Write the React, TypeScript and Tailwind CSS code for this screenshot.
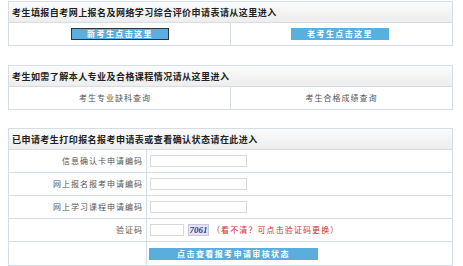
const font = { fontFamily: '"Noto Sans CJK SC", "Noto Sans", sans-serif' };

const Header = ({ children }: { children: React.ReactNode }) => (
  <div className="h-[21px] flex items-center pl-[3px] bg-gradient-to-b from-[#fbfbfb] to-[#ededed] border-b border-[#d5dde5] text-[9px] font-bold tracking-[0.45px] text-[#222] leading-none">
    {children}
  </div>
);

const Row = ({ label, last, children }: { label: string; last?: boolean; children: React.ReactNode }) => (
  <div className={`grid grid-cols-[138px_1fr] h-[23px] ${last ? "" : "border-b border-[#d5dde5]"}`}>
    <div className="flex items-center justify-end pr-[3px] border-r border-[#d5dde5] text-[8px] tracking-[1px] text-[#555]">
      {label}
    </div>
    <div className="flex items-center pl-[3px]">{children}</div>
  </div>
);

const Input = () => <input className="w-[97px] h-[12px] border border-[#d9d9d9] bg-white outline-none" />;

export default function App() {
  return (
    <main className="w-[463px] h-[266px] bg-white pl-[8px] pt-[1px]" style={font}>
      <div className="w-[445px] border border-[#d5dde5]">
        <Header>考生填报自考网上报名及网络学习综合评价申请表请从这里进入</Header>
        <div className="grid grid-cols-[222px_1fr] h-[22px]">
          <div className="flex items-center border-r border-[#d5dde5]">
            <button className="ml-[62px] w-[98px] h-[12px] bg-[#5aaee0] border border-[#2c3440] text-white text-[8px] font-bold tracking-[1.4px] leading-none">
              新考生点击这里
            </button>
          </div>
          <div className="flex items-center">
            <button className="ml-[60px] w-[98px] h-[12px] bg-[#5ab0dc] text-white text-[8px] font-bold tracking-[1.4px] leading-none">
              老考生点击这里
            </button>
          </div>
        </div>
      </div>

      <div className="w-[445px] mt-[19px] border border-[#d5dde5]">
        <Header>考生如需了解本人专业及合格课程情况请从这里进入</Header>
        <div className="grid grid-cols-[222px_1fr] h-[22px] text-[8px] tracking-[1px] text-[#555]">
          <div className="flex items-center pl-[70px] border-r border-[#d5dde5]">考生专业缺科查询</div>
          <div className="flex items-center justify-center">考生合格成绩查询</div>
        </div>
      </div>

      <div className="w-[445px] mt-[18px] border border-[#d5dde5]">
        <Header>已申请考生打印报名报考申请表或查看确认状态请在此进入</Header>
        <Row label="信息确认卡申请编码"><Input /></Row>
        <Row label="网上报名报考申请编码"><Input /></Row>
        <Row label="网上学习课程申请编码"><Input /></Row>
        <Row label="验证码">
          <input className="w-[34px] h-[12px] border border-[#d9d9d9] bg-white outline-none" />
          <span className="ml-[4px] w-[21px] h-[12px] flex items-center justify-center bg-[#e4e4ec] border border-[#c8c8d8] text-[9px] font-bold italic text-[#3b3b9e] leading-none" style={{ fontFamily: '"Liberation Serif", serif' }}>
            7061
          </span>
          <span className="ml-[3px] text-[8px] tracking-[1.1px] text-[#d0302a]">（看不清？可点击验证码更换）</span>
        </Row>
        <Row label="" last>
          <button className="-ml-[1px] w-[169px] h-[12px] bg-[#5aaedc] text-white text-[8px] font-bold tracking-[1.4px] leading-none">
            点击查看报考申请审核状态
          </button>
        </Row>
      </div>
    </main>
  );
}
